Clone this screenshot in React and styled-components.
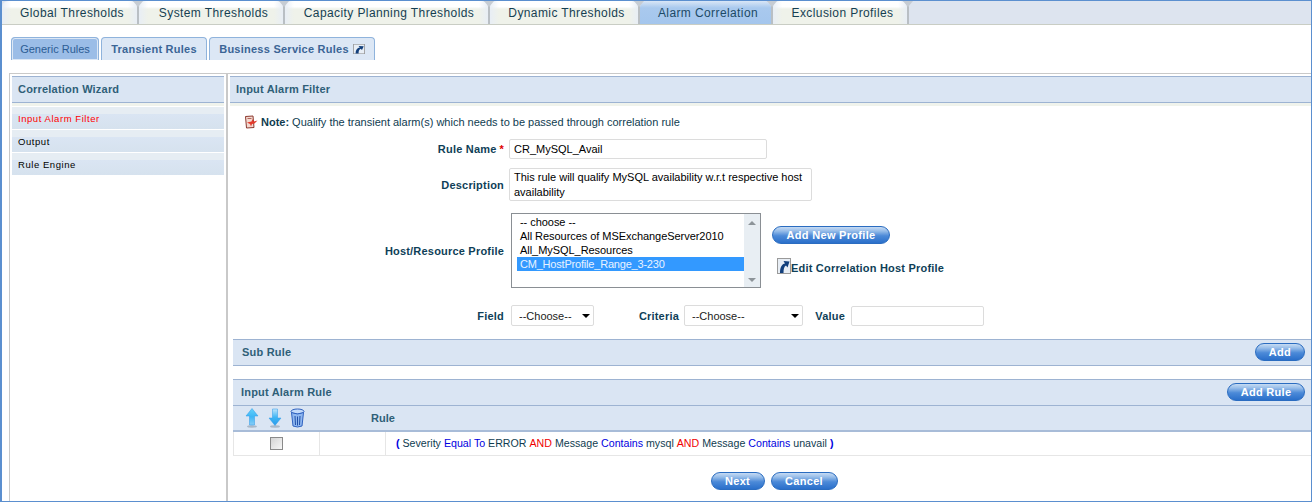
import React from 'react';
import styled, { createGlobalStyle } from 'styled-components';

const GlobalStyle = createGlobalStyle`
  html, body {
    margin: 0;
    padding: 0;
    background: #fff;
  }
  body {
    font-family: "Liberation Sans", Arial, sans-serif;
    font-size: 11px;
    color: #0f3c50;
  }
`;

const Page = styled.div`
  box-sizing: border-box;
  width: 1312px;
  height: 502px;
  border: 1px solid #5b8fcf;
  border-left-width: 2px;
  overflow: hidden;
  display: flex;
  flex-direction: column;
  background: #fff;
`;

const TabStrip = styled.div`
  display: flex;
  height: 23px;
  flex: none;
  background: #dde4ef;
  border-bottom: 1px solid #c9cdc4;
`;

const TopTab = styled.div`
  position: relative;
  box-sizing: border-box;
  width: ${p => p.$w}px;
  margin-right: 2px;
  height: 23px;
  padding: 1px 0 0 5px;
  line-height: 23px;
  text-align: center;
  font-size: 12px;
  letter-spacing: 0.4px;
  color: ${p => (p.$active ? '#1c4a66' : '#163f52')};
  border-radius: 6px 6px 0 0;
  box-shadow: 2px 0 0 #b9bfc4;
  background: ${p =>
    p.$active
      ? 'linear-gradient(#d9e6f6 0, #a9c9ee 30%, #a4c6ed 100%)'
      : `linear-gradient(90deg, #e8eef5 0, transparent 9px, transparent calc(100% - 9px), #e8eef5 100%),
         linear-gradient(#fff 0, #fff 25%, #eff2ea 35%, #eff2ea 100%)`};
  &::after {
    content: '';
    position: absolute;
    top: 0;
    right: -6px;
    border-left: 5px solid transparent;
    border-right: 5px solid transparent;
    border-top: 6px solid #c6ccd3;
    z-index: 1;
  }
`;

const SubTabs = styled.div`
  display: flex;
  gap: 2px;
  height: 23px;
  flex: none;
  margin: 12px 0 13px 9px;
`;

const SubTab = styled.div`
  box-sizing: border-box;
  width: ${p => p.$w}px;
  height: 23px;
  display: flex;
  align-items: center;
  justify-content: center;
  gap: 4px;
  border: 1px solid #8fb3dc;
  border-bottom: none;
  border-radius: 4px 4px 0 0;
  font-size: 11px;
  letter-spacing: ${p => (p.$active ? '0' : '0.25px')};
  font-weight: ${p => (p.$active ? 'normal' : 'bold')};
  color: ${p => (p.$active ? '#2b5c94' : '#3b6596')};
  background: ${p => (p.$active ? '#9bbde7' : '#dce7f5')};
  box-shadow: ${p => (p.$active ? 'inset 0 0 0 1px #dce7f5' : 'none')};
`;

const Main = styled.div`
  flex: 1;
  display: flex;
  margin-left: 7px;
  border-top: 1px solid #c9c9c9;
  min-height: 0;
`;

const Sidebar = styled.aside`
  box-sizing: border-box;
  width: 219px;
  flex: none;
  padding: 2px 2px 0 2px;
  border-left: 1px solid #c9c9c9;
  border-right: 2px solid #c9c9c9;
`;

const BarHeader = styled.div`
  box-sizing: border-box;
  display: flex;
  align-items: center;
  justify-content: space-between;
  height: 27px;
  padding: 0 ${p => p.$pr || 6}px 2px ${p => p.$pl || 6}px;
  background: #dae5f3;
  border-top: 1px solid #9db3d2;
  border-bottom: 1px solid #9db3d2;
  font-weight: bold;
  font-size: 11px;
  letter-spacing: 0.2px;
  color: #2f5f78;
`;

const LightStrip = styled.div`
  height: 3px;
  background: #f0f3ec;
`;

const WizardList = styled.div`
  display: flex;
  flex-direction: column;
  gap: 1px;
  margin-top: 1px;
`;

const WizardItem = styled.div`
  box-sizing: border-box;
  height: 22px;
  padding: 4px 0 0 6px;
  line-height: 16px;
  font-size: 9.5px;
  letter-spacing: 0.55px;
  color: ${p => (p.$active ? '#ff0000' : '#000')};
  background: linear-gradient(#e6edf3 0, #e6edf3 7px, #dae5f3 7px, #d6e2ee 100%);
`;

const Content = styled.main`
  flex: 1;
  min-width: 0;
  padding-top: 2px;
  margin-left: 2px;
  display: flex;
  flex-direction: column;
`;

const NoteRow = styled.div`
  display: flex;
  align-items: center;
  height: 16px;
  margin: 8px 0 0 14px;
  font-size: 11px;
  color: #0f3c50;
  white-space: nowrap;
  b {
    margin: 0 3px 0 3px;
  }
`;

const FormRow = styled.div`
  display: grid;
  grid-template-columns: 274px auto 1fr;
  column-gap: 5px;
  align-items: center;
  margin-top: ${p => p.$mt}px;
`;

const Label = styled.label`
  text-align: right;
  font-weight: bold;
  font-size: 11px;
  letter-spacing: 0.2px;
  color: #0f3f58;
  white-space: nowrap;
`;

const Star = styled.span`
  color: #e00000;
  margin-left: 3px;
`;

const TextInput = styled.input`
  box-sizing: border-box;
  display: block;
  width: ${p => p.$w}px;
  height: 20px;
  margin-left: ${p => p.$ml || 0}px;
  padding: 0 4px;
  border: 1px solid #dcdcdc;
  border-radius: 2px;
  outline: none;
  font: 11px "Liberation Sans", Arial, sans-serif;
  color: #000;
  background: #fff;
`;

const TextArea = styled.textarea`
  box-sizing: border-box;
  display: block;
  width: 303px;
  height: 33px;
  padding: 1px 4px;
  border: 1px solid #dcdcdc;
  border-radius: 2px;
  outline: none;
  resize: none;
  overflow: hidden;
  font: 11px/15px "Liberation Sans", Arial, sans-serif;
  color: #000;
`;

const ListBox = styled.div`
  box-sizing: border-box;
  display: flex;
  width: 250px;
  height: 75px;
  margin-left: 2px;
  border: 1px solid #8a8f94;
`;

const ListOptions = styled.div`
  flex: 1;
  padding: 1px 0 0 5px;
`;

const ListOption = styled.div`
  height: 14px;
  line-height: 14px;
  padding-left: 3px;
  font-size: 11px;
  letter-spacing: ${p => (p.$selected ? '-0.2px' : '-0.05px')};
  color: ${p => (p.$selected ? '#e8f2ff' : '#000')};
  background: ${p => (p.$selected ? '#3399ff' : 'transparent')};
`;

const ScrollTrack = styled.div`
  width: 16px;
  display: flex;
  flex-direction: column;
  justify-content: space-between;
  align-items: center;
  padding: 7px 0 5px;
  background: #e8eef3;
`;

const ScrollArrow = styled.span`
  width: 0;
  height: 0;
  border-left: 4px solid transparent;
  border-right: 4px solid transparent;
  ${p =>
    p.$down ? 'border-top: 4px solid #8d9499;' : 'border-bottom: 4px solid #8d9499;'}
`;

const ProfileActions = styled.div`
  display: flex;
  flex-direction: column;
  align-items: flex-start;
  gap: 14px;
  margin-left: 6px;
  padding-bottom: 2px;
`;

const EditLink = styled.div`
  display: flex;
  align-items: flex-end;
  margin-left: 5px;
  font-weight: bold;
  font-size: 11px;
  letter-spacing: 0.2px;
  color: #0f3f58;
`;

const PillButton = styled.button`
  box-sizing: border-box;
  width: ${p => p.$w}px;
  height: 18px;
  padding: 0;
  border: 1px solid #2a6cc0;
  border-radius: 9px;
  background: linear-gradient(#c6dbf3 0, #97bde9 25%, #4c8ad8 55%, #2a6fca 100%);
  color: #fff;
  font: bold 11px "Liberation Sans", Arial, sans-serif;
  letter-spacing: 0.3px;
  flex: none;
`;

const FilterRow = styled.div`
  display: flex;
  align-items: center;
  margin: 17px 0 0 0;
  height: 21px;
`;

const FilterLabel = styled(Label)`
  width: ${p => p.$w}px;
  flex: none;
`;

const SelectWrap = styled.div`
  position: relative;
  width: ${p => p.$w}px;
  margin-left: ${p => p.$ml}px;
  flex: none;
  &::after {
    content: '';
    position: absolute;
    right: 4px;
    top: 9px;
    border-left: 4px solid transparent;
    border-right: 4px solid transparent;
    border-top: 4px solid #000;
    pointer-events: none;
  }
`;

const Select = styled.select`
  appearance: none;
  box-sizing: border-box;
  display: block;
  width: 100%;
  height: 21px;
  padding: 0 0 0 7px;
  border: 1px solid #dcdcdc;
  border-radius: 2px;
  background: #fff;
  font: 11px "Liberation Sans", Arial, sans-serif;
  color: #222;
`;

const Section = styled.section`
  margin: ${p => p.$mt}px 0 0 3px;
`;

const TableHead = styled.div`
  box-sizing: border-box;
  display: flex;
  align-items: center;
  height: 26px;
  padding-left: 12px;
  background: #dae5f3;
  border-bottom: 2px solid #a8bcd8;
  font-weight: bold;
  font-size: 11px;
  color: #2f5f78;
`;

const IconGroup = styled.div`
  display: flex;
  align-items: center;
  gap: 8.5px;
  width: 126px;
`;

const TableRow = styled.div`
  box-sizing: border-box;
  display: grid;
  grid-template-columns: 86px 66px 1fr;
  height: 24px;
  border-left: 1px solid #e6e6e6;
  border-bottom: 1px solid #e6e6e6;
`;

const Cell = styled.div`
  display: flex;
  align-items: center;
  justify-content: ${p => (p.$center ? 'center' : 'flex-start')};
  padding-left: ${p => p.$pl || 0}px;
  padding-bottom: 1px;
  border-right: ${p => (p.$last ? 'none' : '1px solid #e6e6e6')};
  white-space: pre;
  font-size: 10.65px;
  color: #0f3c50;
`;

const CheckBox = styled.span`
  box-sizing: border-box;
  width: 13px;
  height: 13px;
  border: 1px solid #8a8a8a;
  background: linear-gradient(135deg, #d4d4d4, #f7f7f7);
`;

const Blue = styled.span`
  color: #0000e0;
`;

const Red = styled.span`
  color: #f00000;
`;

const Paren = styled.b`
  color: #0000e0;
`;

const Footer = styled.div`
  display: flex;
  justify-content: center;
  gap: 6px;
  margin: 16px 0 0 3px;
  padding-left: 4px;
`;

const tabs = [
  ['Global Thresholds', 135],
  ['System Thresholds', 144],
  ['Capacity Planning Thresholds', 203],
  ['Dynamic Thresholds', 148],
  ['Alarm Correlation', 131],
  ['Exclusion Profiles', 134],
];

function ShortcutIcon({ width = 14, height = 16 }) {
  return (
    <svg width={width} height={height} viewBox="0 0 14 16" preserveAspectRatio="none">
      <rect x="0.5" y="0.5" width="13" height="15" fill="#e8eef5" stroke="#9a9a9a" />
      <path d="M3 15 C3 9 5 6 8 5.5 L6.5 3 L12.5 3.5 L10.5 9.5 L9 7.5 C7 8.5 6.5 11 6.5 15 Z" fill="#123f7c" />
    </svg>
  );
}

function NoteIcon() {
  return (
    <svg width="14" height="14" viewBox="0 0 14 14">
      <path d="M1.5 1.5 L9 1 L10 12.5 L2.5 13 Z" fill="#f3d9d0" stroke="#8c3a30" />
      <path d="M3 7.5 L7.5 6.5 L8.5 4 L9.5 6.5 L13.5 5.5 L10.5 8.5 L8 9 L7 11.5 L6 9 Z" fill="#e33a2c" />
      <path d="M3.5 3.5 H7.5" stroke="#b5665c" />
    </svg>
  );
}

function ArrowIcon({ down }) {
  const id = down ? 'arrowDownFill' : 'arrowUpFill';
  return (
    <svg width="14" height="20" viewBox="0 0 14 20">
      <defs>
        <linearGradient id={id} x1="0" y1="0" x2="0" y2="1">
          <stop offset="0" stopColor={down ? '#bfe4fb' : '#63d2fb'} />
          <stop offset="0.5" stopColor="#3fb6f5" />
          <stop offset="1" stopColor={down ? '#2a9bea' : '#88cdf6'} />
        </linearGradient>
      </defs>
      <ellipse cx="7" cy="18.5" rx="5" ry="1.2" fill="#a9b8c8" />
      <path
        d={down ? 'M4.5 1 H9.5 V10 H13 L7 17.5 L1 10 H4.5 Z' : 'M7 0.5 L13 8 H9.5 V17 H4.5 V8 H1 Z'}
        fill={`url(#${id})`}
        stroke="#2f9be8"
        strokeWidth="0.5"
      />
    </svg>
  );
}

function TrashIcon() {
  return (
    <svg width="15" height="20" viewBox="0 0 15 20">
      <ellipse cx="7.5" cy="3.5" rx="6.5" ry="2.5" fill="#c3dafa" stroke="#2f62c0" />
      <path d="M1.5 4.5 L3 18 Q7.5 20 12 18 L13.5 4.5 Q7.5 7.5 1.5 4.5 Z" fill="#8fb7f0" stroke="#2f62c0" />
      <path d="M5 8 L5.5 17 M7.5 8.5 V17.5 M10 8 L9.5 17" stroke="#1f4fa8" fill="none" />
    </svg>
  );
}

export default function App() {
  return (
    <>
      <GlobalStyle />
      <Page>
        <TabStrip>
          {tabs.map(([label, w]) => (
            <TopTab key={label} $w={w} $active={label === 'Alarm Correlation'}>
              {label}
            </TopTab>
          ))}
        </TabStrip>

        <SubTabs>
          <SubTab $w={88} $active>Generic Rules</SubTab>
          <SubTab $w={106}>Transient Rules</SubTab>
          <SubTab $w={166}>
            Business Service Rules <ShortcutIcon width={12} height={10} />
          </SubTab>
        </SubTabs>

        <Main>
          <Sidebar>
            <BarHeader>Correlation Wizard</BarHeader>
            <LightStrip />
            <WizardList>
              <WizardItem $active>Input Alarm Filter</WizardItem>
              <WizardItem>Output</WizardItem>
              <WizardItem>Rule Engine</WizardItem>
            </WizardList>
          </Sidebar>

          <Content>
            <BarHeader>Input Alarm Filter</BarHeader>
            <LightStrip />

            <NoteRow>
              <NoteIcon />
              <b>Note:</b> Qualify the transient alarm(s) which needs to be passed through correlation rule
            </NoteRow>

            <FormRow $mt={9}>
              <Label>
                Rule Name<Star>*</Star>
              </Label>
              <TextInput $w={258} readOnly value="CR_MySQL_Avail" />
            </FormRow>

            <FormRow $mt={9}>
              <Label>Description</Label>
              <TextArea
                readOnly
                value="This rule will qualify MySQL availability w.r.t respective host availability"
              />
            </FormRow>

            <FormRow $mt={12}>
              <Label>Host/Resource Profile</Label>
              <ListBox>
                <ListOptions>
                  <ListOption>-- choose --</ListOption>
                  <ListOption>All Resources of MSExchangeServer2010</ListOption>
                  <ListOption>All_MySQL_Resources</ListOption>
                  <ListOption $selected>CM_HostProfile_Range_3-230</ListOption>
                </ListOptions>
                <ScrollTrack>
                  <ScrollArrow />
                  <ScrollArrow $down />
                </ScrollTrack>
              </ListBox>
              <ProfileActions>
                <PillButton $w={118}>Add New Profile</PillButton>
                <EditLink>
                  <ShortcutIcon />
                  Edit Correlation Host Profile
                </EditLink>
              </ProfileActions>
            </FormRow>

            <FilterRow>
              <FilterLabel $w={274}>Field</FilterLabel>
              <SelectWrap $w={83} $ml={7}>
                <Select defaultValue="choose">
                  <option value="choose">--Choose--</option>
                </Select>
              </SelectWrap>
              <FilterLabel $w={85}>Criteria</FilterLabel>
              <SelectWrap $w={119} $ml={5}>
                <Select defaultValue="choose">
                  <option value="choose">--Choose--</option>
                </Select>
              </SelectWrap>
              <FilterLabel $w={42}>Value</FilterLabel>
              <TextInput $w={133} $ml={6} readOnly value="" />
            </FilterRow>

            <Section $mt={13}>
              <BarHeader $pl={9} $pr={6}>
                Sub Rule
                <PillButton $w={50}>Add</PillButton>
              </BarHeader>
            </Section>

            <Section $mt={13}>
              <BarHeader $pl={8} $pr={6}>
                Input Alarm Rule
                <PillButton $w={78}>Add Rule</PillButton>
              </BarHeader>
              <TableHead>
                <IconGroup>
                  <ArrowIcon />
                  <ArrowIcon down />
                  <TrashIcon />
                </IconGroup>
                Rule
              </TableHead>
              <TableRow>
                <Cell $center>
                  <CheckBox />
                </Cell>
                <Cell />
                <Cell $last $pl={10}>
                  <Paren>(</Paren> Severity <Blue>Equal To</Blue> ERROR <Red>AND</Red> Message{' '}
                  <Blue>Contains</Blue> mysql <Red>AND</Red> Message <Blue>Contains</Blue> unavail{' '}
                  <Paren>)</Paren>
                </Cell>
              </TableRow>
            </Section>

            <Footer>
              <PillButton $w={54}>Next</PillButton>
              <PillButton $w={67}>Cancel</PillButton>
            </Footer>
          </Content>
        </Main>
      </Page>
    </>
  );
}
